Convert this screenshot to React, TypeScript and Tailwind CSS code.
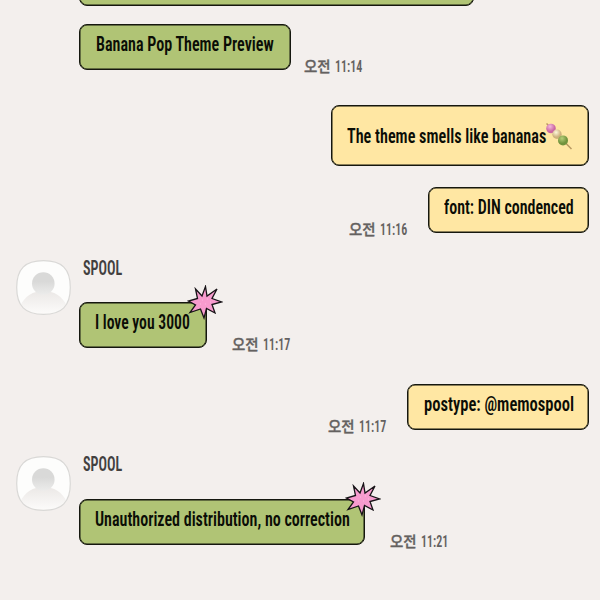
import { useLayoutEffect, useRef, useState } from "react";
import clsx from "clsx";

// Squeezes a line of text horizontally so it fills the given width
function CondensedText({ text, width, className }: { text: string; width: number; className?: string }) {
  const ref = useRef<HTMLSpanElement>(null);
  const [scale, setScale] = useState(1);

  useLayoutEffect(() => {
    if (ref.current) setScale(width / ref.current.offsetWidth);
  }, [text, width]);

  return (
    <span className="block shrink-0" style={{ width }}>
      <span
        ref={ref}
        className={clsx("inline-block origin-left whitespace-nowrap", className)}
        style={{ transform: `scaleX(${scale})` }}
      >
        {text}
      </span>
    </span>
  );
}

function Time({ value }: { value: string }) {
  return (
    <div className="-mb-1 flex h-4 items-center gap-[4px] leading-4 text-[#646160]">
      <CondensedText
        text="오전"
        width={27}
        className="font-['Noto_Sans_CJK_KR',sans-serif] text-[15px] font-medium [-webkit-text-stroke:0.35px_#646160]"
      />
      <CondensedText text={value} width={27} className="font-[Roboto,sans-serif] text-[16px] font-semibold [font-stretch:75%]" />
    </div>
  );
}

function Burst() {
  return (
    <svg viewBox="0 0 36 35" className="absolute -top-[18px] -right-[17px] h-[35px] w-9">
      <path
        d="M18.5 1.5 L20 11 L30 4 L25 13.5 L34.5 17 L25 19.5 L28 28 L19.5 23.5 L17 33 L13.5 24 L3 27.5 L8.5 20 L1.5 16 L10.5 13.5 L8.5 4 L15 11 Z"
        fill="#f79bce"
        stroke="#171317"
        strokeWidth="1.3"
        strokeLinejoin="miter"
      />
      <path d="M15 15h1M20 14h1M18 19h1M13 19h1M23 17h1" stroke="#fbb8df" strokeWidth="1" />
    </svg>
  );
}

function Dango() {
  return (
    <svg viewBox="0 0 26 27" className="h-[27px] w-[26px] shrink-0">
      <defs>
        <radialGradient id="pink" cx="40%" cy="30%">
          <stop offset="0" stopColor="#f4b8dc" />
          <stop offset="1" stopColor="#cb68a2" />
        </radialGradient>
        <radialGradient id="cream" cx="40%" cy="30%">
          <stop offset="0" stopColor="#fff8dc" />
          <stop offset="1" stopColor="#cdb27c" />
        </radialGradient>
        <radialGradient id="green" cx="40%" cy="30%">
          <stop offset="0" stopColor="#b6cf78" />
          <stop offset="1" stopColor="#71933d" />
        </radialGradient>
      </defs>
      <path d="M0.5 0.5 L25.5 26" stroke="#b99860" strokeWidth="1.5" />
      <circle cx="5" cy="5.5" r="4.8" fill="url(#pink)" />
      <circle cx="11" cy="11.3" r="4.7" fill="url(#cream)" />
      <circle cx="17" cy="17.4" r="5" fill="url(#green)" />
    </svg>
  );
}

function Avatar({ id }: { id: string }) {
  return (
    <svg viewBox="0 0 55 55" className="h-[55px] w-[55px] shrink-0">
      <defs>
        <linearGradient id={`${id}-head`} x1="0" y1="0" x2="0" y2="1">
          <stop offset="0.4" stopColor="#d9d9d8" />
          <stop offset="1" stopColor="#ececeb" />
        </linearGradient>
        <linearGradient id={`${id}-body`} x1="0" y1="0" x2="0" y2="1">
          <stop offset="0" stopColor="#ebe8e6" />
          <stop offset="1" stopColor="#fdfcfb" />
        </linearGradient>
        <clipPath id={`${id}-clip`}>
          <path d="M27.5 .7C46 .7 54.3 9 54.3 27.5S46 54.3 27.5 54.3 .7 46 .7 27.5 9 .7 27.5 .7Z" />
        </clipPath>
      </defs>
      <path d="M27.5 .7C46 .7 54.3 9 54.3 27.5S46 54.3 27.5 54.3 .7 46 .7 27.5 9 .7 27.5 .7Z" fill="#fdfdfc" />
      <g clipPath={`url(#${id}-clip)`}>
        <path d="M4 46C9 36 17 31 27.5 31S46 36 51 46V55H4Z" fill={`url(#${id}-body)`} />
        <circle cx="27.3" cy="23.5" r="11.3" fill={`url(#${id}-head)`} />
      </g>
      <path
        d="M27.5 .7C46 .7 54.3 9 54.3 27.5S46 54.3 27.5 54.3 .7 46 .7 27.5 9 .7 27.5 .7Z"
        fill="none"
        stroke="#d9d8d6"
        strokeWidth="1.2"
      />
    </svg>
  );
}

const bubble = "relative flex shrink-0 rounded-[8px] border border-[#15170f] shadow-[inset_0_0_0_0.5px_#15170f]";
const message = "font-[Roboto,sans-serif] text-[19.5px] leading-6 font-semibold text-[#0b0d06] [font-stretch:75%]";
const sender = "font-[Roboto,sans-serif] text-[19.5px] leading-6 font-semibold text-[#42403f] [font-stretch:75%]";

export default function App() {
  return (
    <div className="h-[600px] w-[600px] overflow-hidden bg-[#f3efed]">
      <div className={clsx(bubble, "-mt-10 ml-[79px] h-[46px] w-[395px] bg-[#b0c475]")} />

      <div className="mt-[18px] ml-[79px] flex items-end gap-[13px]">
        <div className={clsx(bubble, "h-[46px] w-[212px] bg-[#b0c475] pt-2 pl-4")}>
          <CondensedText text="Banana Pop Theme Preview" width={178} className={message} />
        </div>
        <Time value="11:14" />
      </div>

      <div className="mt-[35px] mr-[11px] flex justify-end">
        <div className={clsx(bubble, "h-[61px] w-[258px] items-center bg-[#ffe7a3] pt-0.5 pl-[15px]")}>
          <CondensedText text="The theme smells like bananas" width={199} className={message} />
          <Dango />
        </div>
      </div>

      <div className="mt-[21px] mr-[11px] flex items-end justify-end gap-[21px]">
        <Time value="11:16" />
        <div className={clsx(bubble, "h-[46px] w-[161px] bg-[#ffe7a3] pt-2 pl-[15px]")}>
          <CondensedText text="font: DIN condenced" width={130} className={message} />
        </div>
      </div>

      <div className="mt-[27px] ml-4 flex h-[88px] gap-2">
        <Avatar id="first" />
        <div className="flex flex-col justify-between">
          <div className="-mt-[3px] pl-1">
            <CondensedText text="SPOOL" width={39} className={sender} />
          </div>
          <div className="flex items-end gap-[25px]">
            <div className={clsx(bubble, "h-[46px] w-32 bg-[#b0c475] pt-2 pl-[15px]")}>
              <CondensedText text="I love you 3000" width={95} className={message} />
              <Burst />
            </div>
            <Time value="11:17" />
          </div>
        </div>
      </div>

      <div className="mt-9 mr-[11px] flex items-end justify-end gap-[21px]">
        <Time value="11:17" />
        <div className={clsx(bubble, "h-[46px] w-[182px] bg-[#ffe7a3] pt-2 pl-4")}>
          <CondensedText text="postype: @memospool" width={150} className={message} />
        </div>
      </div>

      <div className="mt-[26px] ml-4 flex h-[89px] gap-2">
        <Avatar id="second" />
        <div className="flex flex-col justify-between">
          <div className="-mt-[3px] pl-1">
            <CondensedText text="SPOOL" width={39} className={sender} />
          </div>
          <div className="flex items-end gap-[25px]">
            <div className={clsx(bubble, "h-[46px] w-[286px] bg-[#b0c475] pt-2 pl-[15px]")}>
              <CondensedText text="Unauthorized distribution, no correction" width={255} className={message} />
              <Burst />
            </div>
            <Time value="11:21" />
          </div>
        </div>
      </div>
    </div>
  );
}
